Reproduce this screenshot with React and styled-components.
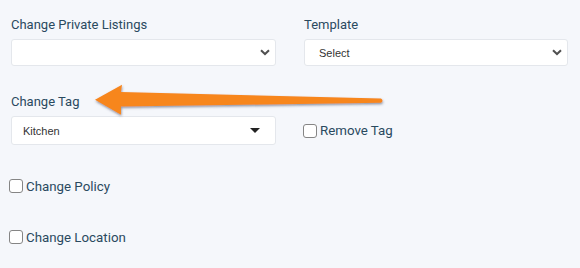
import React from "react"
import styled, { createGlobalStyle } from "styled-components"

const Global = createGlobalStyle`
  html, body {
    margin: 0;
    padding: 0;
    background: #f5f7fb;
  }
  body {
    font-family: Roboto, "Liberation Sans", sans-serif;
  }
`

const Page = styled.div`
  position: relative;
  width: 580px;
  height: 268px;
  box-sizing: border-box;
  padding: 17px 12px 0 11px;
  background: #f5f7fb;
  overflow: hidden;
`

const Row = styled.div`
  display: grid;
  grid-template-columns: 265px 264px;
  column-gap: 28px;
  align-items: end;
  margin-bottom: ${(p) => p.gap || 0}px;
`

const Field = styled.div`
  display: flex;
  flex-direction: column;
`

const Label = styled.div`
  font-size: 13px;
  line-height: 16px;
  color: #2a4a5f;
  margin-bottom: 6px;
`

const SelectBox = styled.div`
  height: ${(p) => p.h}px;
  box-sizing: border-box;
  background: #fff;
  border: 1px solid #e4e7ec;
  border-radius: 3px;
  display: flex;
  align-items: center;
  justify-content: space-between;
  padding: 0 ${(p) => p.pr}px 0 ${(p) => p.pl}px;
  font-family: "Liberation Sans", Arial, sans-serif;
  font-size: 11px;
  color: #333;
`

const CheckRow = styled.label`
  display: flex;
  align-items: center;
  gap: 3px;
  font-size: 13.3px;
  color: #2a4a5f;
  height: ${(p) => p.h || 29}px;
  margin-left: ${(p) => p.ml || 0}px;
`

const Box = styled.span`
  width: 14px;
  height: 14px;
  box-sizing: border-box;
  border: 1.5px solid #858585;
  border-radius: 3px;
  background: #fff;
  flex: none;
`

const Spacer = styled.div`
  height: ${(p) => p.h}px;
`

const ArrowLayer = styled.svg`
  position: absolute;
  left: 0;
  top: 0;
  pointer-events: none;
`

const Chevron = () => (
  <svg width="10" height="7" viewBox="0 0 10 7">
    <path d="M1 1.2 L5 5 L9 1.2" fill="none" stroke="#505050" strokeWidth="2" />
  </svg>
)

const Caret = () => (
  <svg width="10" height="5" viewBox="0 0 10 5">
    <path d="M0 0 H10 L5 5 Z" fill="#222" />
  </svg>
)

const Check = ({ children, h, ml }) => (
  <CheckRow h={h} ml={ml}>
    <Box />
    {children}
  </CheckRow>
)

export default function App() {
  return (
    <Page>
      <Global />
      <Row gap={28}>
        <Field>
          <Label>Change Private Listings</Label>
          <SelectBox h={27} pl={14} pr={5}>
            <span />
            <Chevron />
          </SelectBox>
        </Field>
        <Field>
          <Label>Template</Label>
          <SelectBox h={27} pl={14} pr={5}>
            <span>Select</span>
            <Chevron />
          </SelectBox>
        </Field>
      </Row>
      <Row gap={29}>
        <Field>
          <Label>Change Tag</Label>
          <SelectBox h={29} pl={11} pr={15}>
            <span>Kitchen</span>
            <Caret />
          </SelectBox>
        </Field>
        <Check ml={-1}>Remove Tag</Check>
      </Row>
      <Check ml={-2} h={24}>Change Policy</Check>
      <Spacer h={27} />
      <Check ml={-2} h={24}>Change Location</Check>

      <ArrowLayer width="580" height="268" viewBox="0 0 580 268">
        <defs>
          <filter id="sh" x="-10%" y="-50%" width="120%" height="200%">
            <feDropShadow dx="0.5" dy="1.5" stdDeviation="1" floodColor="#3a3f55" floodOpacity="0.55" />
          </filter>
        </defs>
        <path
          d="M95 99.7 L122 84.7 L121 92 L381 98.6 Q384 100.8 381 102.8 L121 106.5 L121 114.7 Z"
          fill="#f7861e"
          filter="url(#sh)"
        />
      </ArrowLayer>
    </Page>
  )
}
